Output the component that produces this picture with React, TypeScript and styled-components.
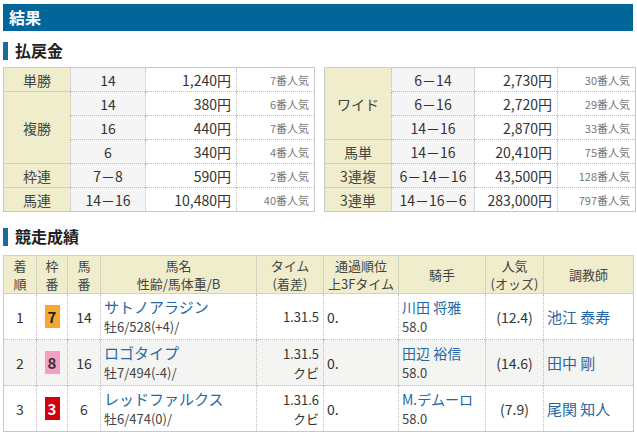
import React from "react";
import styled, { createGlobalStyle } from "styled-components";

const Global = createGlobalStyle`
  html, body { margin: 0; padding: 0; background: #fff; }
  body { font-family: "Noto Sans CJK JP", "Noto Sans", sans-serif; color: #333; }
  * { box-sizing: border-box; }
`;

const Page = styled.div`
  width: 637px;
  padding: 4px 4px 0 3px;
`;

const TitleBar = styled.div`
  height: 27px;
  background: #02669b;
  color: #fff;
  font-weight: bold;
  font-size: 16px;
  line-height: 27px;
  padding-left: 6px;
`;

const Heading = styled.h2<{ $top: number }>`
  margin: ${(p) => p.$top}px 0 0 0;
  height: 19px;
  display: flex;
  align-items: center;
  gap: 7px;
  font-size: 16px;
  font-weight: bold;
  color: #222;
  line-height: 19px;
  &::before {
    content: "";
    width: 5px;
    height: 18px;
    background: #1a6aa0;
  }
`;

const PayoutWrap = styled.div`
  display: flex;
  gap: 9px;
  margin-top: 7px;
`;

const PayTable = styled.table`
  width: 311px;
  border-collapse: collapse;
  table-layout: fixed;
  border: 1px solid #c8c8c8;
  font-size: 14px;
`;

const Td = styled.td<{ $kind: "label" | "num" | "pay" | "pop" }>`
  height: 24px;
  padding: 0 5px 0 0;
  border-top: 1px dotted #bdbdbd;
  border-left: 1px dotted #bdbdbd;
  line-height: 16px;
  white-space: nowrap;
  text-align: ${(p) =>
    p.$kind === "label" || p.$kind === "num" ? "center" : "right"};
  background: ${(p) =>
    p.$kind === "label" ? "#efedcc" : p.$kind === "num" ? "#f5f5f5" : "#fff"};
  ${(p) => (p.$kind === "label" || p.$kind === "num" ? "padding: 0;" : "")}
  ${(p) => (p.$kind === "label" ? "border-top: 1px solid #cfcfcf; border-left: none; color: #444;" : "")}
  ${(p) => (p.$kind === "pop" ? "font-size: 11px; color: #777;" : "")}
`;

type PayRow = { label?: string; span?: number; num: string; pay: string; pop: string };

const leftRows: PayRow[] = [
  { label: "単勝", num: "14", pay: "1,240円", pop: "7番人気" },
  { label: "複勝", span: 3, num: "14", pay: "380円", pop: "6番人気" },
  { num: "16", pay: "440円", pop: "7番人気" },
  { num: "6", pay: "340円", pop: "4番人気" },
  { label: "枠連", num: "7－8", pay: "590円", pop: "2番人気" },
  { label: "馬連", num: "14－16", pay: "10,480円", pop: "40番人気" },
];

const rightRows: PayRow[] = [
  { label: "ワイド", span: 3, num: "6－14", pay: "2,730円", pop: "30番人気" },
  { num: "6－16", pay: "2,720円", pop: "29番人気" },
  { num: "14－16", pay: "2,870円", pop: "33番人気" },
  { label: "馬単", num: "14－16", pay: "20,410円", pop: "75番人気" },
  { label: "3連複", num: "6－14－16", pay: "43,500円", pop: "128番人気" },
  { label: "3連単", num: "14－16－6", pay: "283,000円", pop: "797番人気" },
];

const Payout = ({ rows, widths }: { rows: PayRow[]; widths: number[] }) => (
  <PayTable>
    <colgroup>
      {widths.map((w, i) => (
        <col key={i} style={{ width: w }} />
      ))}
    </colgroup>
    <tbody>
      {rows.map((r, i) => (
        <tr key={i}>
          {r.label && (
            <Td $kind="label" rowSpan={r.span ?? 1}>
              {r.label}
            </Td>
          )}
          <Td $kind="num">{r.num}</Td>
          <Td $kind="pay">{r.pay}</Td>
          <Td $kind="pop">{r.pop}</Td>
        </tr>
      ))}
    </tbody>
  </PayTable>
);

const RaceTable = styled.table`
  width: 630px;
  margin-top: 9px;
  border-collapse: collapse;
  table-layout: fixed;
  border: 1px solid #c8c8c8;
  font-size: 14px;
`;

const Th = styled.th`
  height: 38px;
  padding: 0;
  background: #efedcc;
  border: 1px solid #d2d2c0;
  font-weight: normal;
  font-size: 13px;
  line-height: 18px;
  color: #444;
  text-align: center;
`;

const ThLine = styled.span`
  display: block;
  line-height: 18px;
`;

const Row = styled.tr<{ $alt: boolean }>`
  background: ${(p) => (p.$alt ? "#f4f4f2" : "#fff")};
`;

const Cell = styled.td<{ $align?: "left" | "center" | "right" }>`
  height: 46px;
  padding: 0 ${(p) => (p.$align === "right" ? "4px" : "3px")} 0 3px;
  border-top: 1px dotted #bdbdbd;
  border-left: 1px dotted #bdbdbd;
  text-align: ${(p) => p.$align ?? "center"};
  vertical-align: middle;
  line-height: 18px;
  white-space: nowrap;
`;

const Waku = styled.span<{ $bg: string; $fg: string }>`
  display: inline-flex;
  align-items: center;
  justify-content: center;
  width: 15px;
  height: 23px;
  background: ${(p) => p.$bg};
  color: ${(p) => p.$fg};
  font-weight: bold;
  font-size: 15px;
`;

const Link = styled.span<{ $size?: number }>`
  display: block;
  color: #2668a6;
  font-size: ${(p) => p.$size ?? 14}px;
  line-height: 20px;
`;

const Sub = styled.span`
  display: block;
  font-size: 13px;
  line-height: 19px;
  color: #444;
`;

const Small = styled.span`
  display: block;
  font-size: 13px;
  line-height: 19px;
`;

type Horse = {
  pos: string; waku: string; wBg: string; wFg: string; num: string;
  name: string; info: string; time: string; margin?: string;
  pass: string; jockey: string; weight: string; odds: string; trainer: string;
};

const horses: Horse[] = [
  { pos: "1", waku: "7", wBg: "#f7a833", wFg: "#222", num: "14", name: "サトノアラジン", info: "牡6/528(+4)/", time: "1.31.5", pass: "0.", jockey: "川田 将雅", weight: "58.0", odds: "(12.4)", trainer: "池江 泰寿" },
  { pos: "2", waku: "8", wBg: "#f59fc3", wFg: "#333", num: "16", name: "ロゴタイプ", info: "牡7/494(-4)/", time: "1.31.5", margin: "クビ", pass: "0.", jockey: "田辺 裕信", weight: "58.0", odds: "(14.6)", trainer: "田中 剛" },
  { pos: "3", waku: "3", wBg: "#d3000f", wFg: "#fff", num: "6", name: "レッドファルクス", info: "牡6/474(0)/", time: "1.31.6", margin: "クビ", pass: "0.", jockey: "M.デムーロ", weight: "58.0", odds: "(7.9)", trainer: "尾関 知人" },
];

const raceWidths = [33, 31, 33, 156, 67, 75, 87, 58, 90];

const headers: string[][] = [
  ["着", "順"],
  ["枠", "番"],
  ["馬", "番"],
  ["馬名", "性齢/馬体重/B"],
  ["タイム", "(着差)"],
  ["通過順位", "上3Fタイム"],
  ["騎手"],
  ["人気", "(オッズ)"],
  ["調教師"],
];

export default function App() {
  return (
    <Page>
      <Global />
      <TitleBar>結果</TitleBar>
      <Heading $top={10}>払戻金</Heading>
      <PayoutWrap>
        <Payout rows={leftRows} widths={[67, 75, 91, 78]} />
        <Payout rows={rightRows} widths={[67, 83, 83, 78]} />
      </PayoutWrap>
      <Heading $top={15}>競走成績</Heading>
      <RaceTable>
        <colgroup>
          {raceWidths.map((w, i) => (
            <col key={i} style={{ width: w }} />
          ))}
        </colgroup>
        <thead>
          <tr>
            {headers.map((lines, i) => (
              <Th key={i}>
                {lines.map((l, j) => (
                  <ThLine key={j}>{l}</ThLine>
                ))}
              </Th>
            ))}
          </tr>
        </thead>
        <tbody>
          {horses.map((h, i) => (
            <Row key={i} $alt={i === 1}>
              <Cell>{h.pos}</Cell>
              <Cell>
                <Waku $bg={h.wBg} $fg={h.wFg}>{h.waku}</Waku>
              </Cell>
              <Cell>{h.num}</Cell>
              <Cell $align="left">
                <Link $size={15}>{h.name}</Link>
                <Sub>{h.info}</Sub>
              </Cell>
              <Cell $align="right">
                <Small>{h.time}</Small>
                {h.margin && <Small>{h.margin}</Small>}
              </Cell>
              <Cell $align="left">{h.pass}</Cell>
              <Cell $align="left">
                <Link>{h.jockey}</Link>
                <Sub>{h.weight}</Sub>
              </Cell>
              <Cell>{h.odds}</Cell>
              <Cell $align="left">
                <Link $size={15}>{h.trainer}</Link>
              </Cell>
            </Row>
          ))}
        </tbody>
      </RaceTable>
    </Page>
  );
}
